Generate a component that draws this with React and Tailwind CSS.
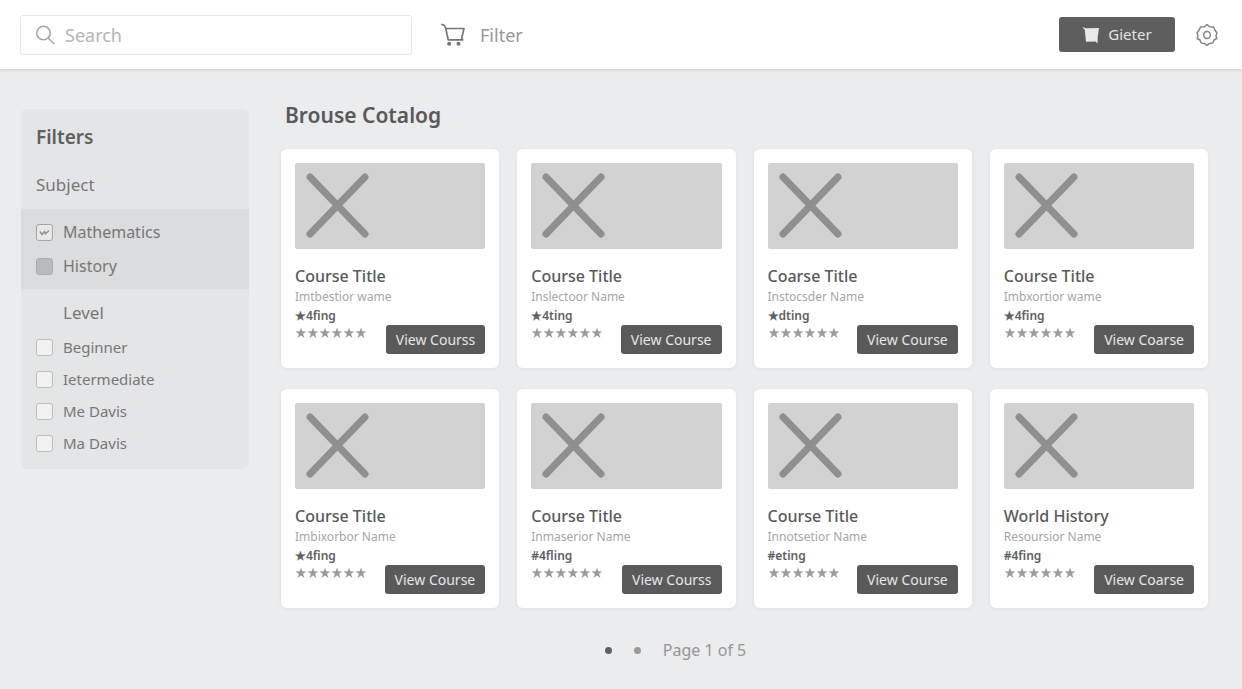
import React from "react";

const courses = [
  { title: "Course Title", instructor: "Imtbestior wame", rating: "★4fing", action: "View Courss" },
  { title: "Course Title", instructor: "Inslectoor Name", rating: "★4ting", action: "View Course" },
  { title: "Coarse Title", instructor: "Instocsder Name", rating: "★dting", action: "View Course" },
  { title: "Course Title", instructor: "Imbxortior wame", rating: "★4fing", action: "View Coarse" },
  { title: "Course Title", instructor: "Imbixorbor Name", rating: "★4fing", action: "View Course" },
  { title: "Course Title", instructor: "Inmaserior Name", rating: "#4fling", action: "View Courss" },
  { title: "Course Title", instructor: "Innotsetior Name", rating: "#eting", action: "View Course" },
  { title: "World History", instructor: "Resoursior Name", rating: "#4fing", action: "View Coarse" },
];

const levels = ["Beginner", "Ietermediate", "Me Davis", "Ma Davis"];

function Star() {
  return (
    <svg viewBox="0 0 12 12" className="size-3" fill="currentColor" aria-hidden="true">
      <path d="M6 .5 7.3 4.2 11.4 4.4 8.2 6.8 9.4 11 6 8.6 2.6 11 3.8 6.8.6 4.4 4.7 4.2Z" />
    </svg>
  );
}

function SearchIcon() {
  return (
    <svg viewBox="0 0 22 22" className="size-[22px] shrink-0 text-[#a5a5a5]" fill="none" stroke="currentColor" strokeWidth="1.6" strokeLinecap="round" aria-hidden="true">
      <circle cx="8.500" cy="9" r="6.800" />
      <path d="m13.500 14.500 5.500 5" />
    </svg>
  );
}

function CartIcon() {
  return (
    <svg viewBox="0 0 26 26" className="size-[26px] text-[#777777]" fill="none" stroke="currentColor" strokeWidth="1.7" strokeLinecap="round" strokeLinejoin="round" aria-hidden="true">
      <path d="M2 2.500 4.500 3.500 5.800 6.500 8.200 17.800H22.500" />
      <path d="M6 6.500H24L21.800 15.500 22.500 17.800" />
      <circle cx="9.200" cy="21.800" r="1.200" fill="currentColor" />
      <circle cx="18.500" cy="21.800" r="1.200" fill="currentColor" />
    </svg>
  );
}

function BasketIcon() {
  return (
    <svg viewBox="0 0 18 18" className="size-[18px] text-[#e8e8e8]" fill="currentColor" aria-hidden="true">
      <path d="M.5 1 4 2.200 17 2 15.800 10 15.500 17.500 13.500 15.500 4 15.800 2.800 4Z" />
    </svg>
  );
}

function GearIcon() {
  return (
    <svg viewBox="0 0 24 24" className="size-6" fill="none" stroke="currentColor" strokeWidth="1.5" strokeLinejoin="round" aria-hidden="true">
      <path d="M12 1.500 14.500 3.800 18.500 4 20 7.300 22 10 21 12.500 21.800 15.500 19 17 17.800 20 14.500 20.400 12 22.500 9.500 20.400 6.200 20 5 17 2.200 15.500 3 12.500 2 10 4 7.300 5.500 4 9.500 3.800Z" />
      <circle cx="12" cy="12" r="3.400" />
    </svg>
  );
}

const boxStyles = {
  empty: "border-[#bcbdbe] bg-[#f2f2f3]",
  check: "border-[#a5a5a7] bg-[#e8e8e9]",
  filled: "border-[#aaabae] bg-[#b9babd]",
};

function Option({ label, className, box = "empty" }) {
  return (
    <label className={`flex items-center gap-2.5 text-[#777777] ${className}`}>
      <span className="grid size-[17px] shrink-0 place-items-center">
        <input
          type="checkbox"
          defaultChecked={box === "check"}
          className={`peer col-start-1 row-start-1 size-[17px] appearance-none rounded-[3px] border ${boxStyles[box]}`}
        />
        <svg viewBox="0 0 17 17" className="pointer-events-none invisible col-start-1 row-start-1 size-[17px] text-[#909092] peer-checked:visible" fill="none" stroke="currentColor" strokeWidth="1.4" aria-hidden="true">
          <path d="M4 7.500 6 10.500 8.500 7.500 9.500 9.800 13 6.500" />
        </svg>
      </span>
      {label}
    </label>
  );
}

function CourseCard({ title, instructor, rating, action }) {
  return (
    <article className="flex flex-col rounded-md bg-white p-3.5 shadow-[0_1px_4px_rgba(0,0,0,0.06)]">
      <div className="h-[86px] rounded-xs bg-[#d2d2d2]">
        <svg viewBox="0 0 84 86" className="h-full text-[#8f8f8f]" fill="none" stroke="currentColor" strokeWidth="7" strokeLinecap="round" aria-hidden="true">
          <path d="M15 14 70 71M70 14 15 71" />
        </svg>
      </div>
      <h2 className="mt-4 text-base leading-[22px] font-medium text-[#595959]">{title}</h2>
      <p className="text-xs leading-5 text-[#a6a6a6]">{instructor}</p>
      <p className="text-xs leading-[18px] font-semibold text-[#606060]">{rating}</p>
      <div className="flex items-start justify-between">
        <div className="flex pt-0.5 text-[#9c9c9c]" role="img" aria-label="6 stars">
          {[0, 1, 2, 3, 4, 5].map((n) => (
            <Star key={n} />
          ))}
        </div>
        <button className="h-[29px] rounded-[3px] bg-[#5a5a5a] px-2.5 text-sm whitespace-nowrap text-[#e6e6e6]">{action}</button>
      </div>
    </article>
  );
}

export default function App() {
  return (
    <div className="min-h-screen bg-[#ebeced] font-['Noto_Sans',sans-serif]">
      <header className="flex h-[69px] items-center bg-white pr-[23px] pl-5 shadow-[0_1px_3px_rgba(0,0,0,0.12)]">
        <label className="flex h-10 w-[392px] items-center gap-2 rounded-[3px] border border-[#e7e7e7] px-3.5">
          <SearchIcon />
          <input type="search" aria-label="Search" placeholder="Search" className="min-w-0 flex-1 bg-transparent text-lg outline-none placeholder:text-[#b5b5b5]" />
        </label>
        <button className="ml-7 flex items-center gap-3.5 text-lg text-[#979797]">
          <CartIcon />
          Filter
        </button>
        <button className="ml-auto flex h-[35px] w-[116px] items-center justify-center gap-2 rounded-[3px] bg-[#5e5e5e] text-[15px] text-[#e4e4e4]">
          <BasketIcon />
          Gieter
        </button>
        <button aria-label="Settings" className="ml-5 text-[#858585]">
          <GearIcon />
        </button>
      </header>

      <div className="flex items-start gap-8 pr-[34px] pl-[21px]">
        <aside className="mt-10 w-[228px] shrink-0 rounded-md bg-[#e4e5e6] pb-2.5">
          <h2 className="px-[15px] pt-3.5 text-[19px] leading-7 font-semibold text-[#606060]">Filters</h2>
          <h3 className="mt-5 px-[15px] text-[17px] leading-7 text-[#777777]">Subject</h3>
          <div className="mt-2.5 bg-[#dbdcde] px-[15px] py-1.5">
            <Option label="Mathematics" className="h-[34px] text-base" box="check" />
            <Option label="History" className="h-[34px] text-base" box="filled" />
          </div>
          <h3 className="mt-2.5 pl-[42px] text-[17px] leading-7 text-[#777777]">Level</h3>
          <div className="mt-1 px-[15px]">
            {levels.map((level) => (
              <Option key={level} label={level} className="h-8 text-[15px]" />
            ))}
          </div>
        </aside>

        <main className="min-w-0 flex-1">
          <h1 className="mt-7 px-1 text-[21px] leading-9 font-semibold text-[#595959]">Brouse Cotalog</h1>
          <div className="mt-4 grid grid-cols-4 gap-x-[18px] gap-y-[21px]">
            {courses.map((course, i) => (
              <CourseCard key={i} {...course} />
            ))}
          </div>
          <nav aria-label="Pagination" className="mt-[30px] flex items-center justify-center gap-[22px] pr-[138px] text-[#969696]">
            <button aria-label="Page 1" className="size-[7px] rounded-full bg-[#606060]" />
            <button aria-label="Page 2" className="size-[7px] rounded-full bg-[#999999]" />
            <span className="text-base">Page 1 of 5</span>
          </nav>
        </main>
      </div>
    </div>
  );
}
